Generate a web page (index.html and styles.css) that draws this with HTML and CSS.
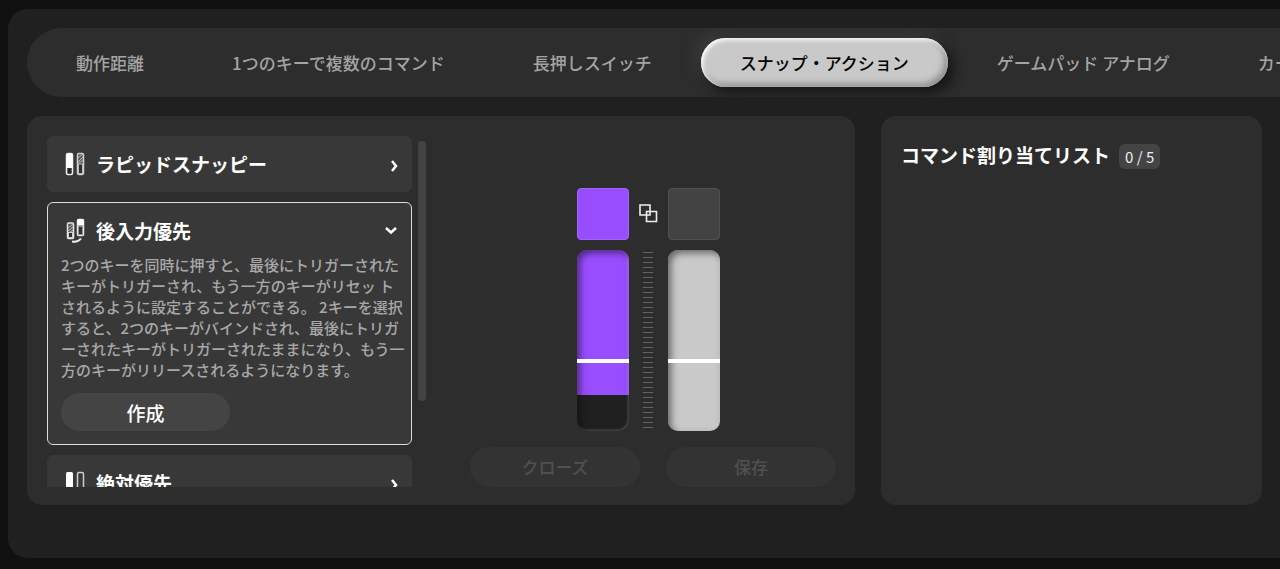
FILE: index.html
```html
<!DOCTYPE html>
<html lang="ja">
<head>
<meta charset="utf-8">
<meta name="viewport" content="width=device-width, initial-scale=1">
<title>スナップ・アクション</title>
<link rel="stylesheet" href="styles.css">
</head>
<body>
<main class="shell">
  <nav class="tabs">
    <button class="tab" type="button">動作距離</button>
    <button class="tab" type="button">1つのキーで複数のコマンド</button>
    <button class="tab" type="button">長押しスイッチ</button>
    <button class="tab tab-active" type="button">スナップ・アクション</button>
    <button class="tab" type="button">ゲームパッド アナログ</button>
    <button class="tab" type="button">カー</button>
  </nav>
  <div class="panels">
    <section class="panel editor">
      <div class="modes">
        <div class="mode-list">
          <article class="card">
            <button class="card-head" type="button">
              <svg class="mode-icon" viewBox="0 0 20 25" aria-hidden="true">
                <rect x="1.500" y="2.500" width="6" height="21" rx="1.500" fill="none" stroke="#eee" stroke-width="1.500"/>
                <path d="M1.500 3h6v14h-6z" fill="#fff"/><path d="M3 17.500h3v5H3z" fill="#252525"/>
                <rect x="12.500" y="2.500" width="6" height="21" rx="1.500" fill="#555" stroke="#d0d0d0" stroke-width="1.500"/>
                <path d="M13 7l5-4M13 11l5-5M14 12l4-3" stroke="#bbb"/>
                <rect x="13.500" y="13" width="4" height="9.500" fill="#303030" stroke="#bbb"/>
              </svg>
              <span class="card-title">ラピッドスナッピー</span>
              <svg class="chevron" viewBox="0 0 14 20" aria-hidden="true"><path d="M8 8l4 5-4 5"/></svg>
            </button>
          </article>
          <article class="card card-open">
            <button class="card-head" type="button" aria-expanded="true">
              <svg class="mode-icon" viewBox="0 0 20 25" aria-hidden="true">
                <rect x="2.500" y="5" width="6" height="15.500" rx="1" fill="#555" stroke="#e4e4e4" stroke-width="1.500"/>
                <path d="M3 10l5-4M3 13l5-4M5 14l3-2" stroke="#bbb"/>
                <rect x="3.500" y="14.500" width="4" height="5" fill="#303030" stroke="#ccc"/>
                <rect x="12.500" y="1.500" width="6" height="16" rx="1" fill="#444" stroke="#e4e4e4" stroke-width="1.500"/>
                <path d="M12.500 1.500h6v6h-6z" fill="#fff"/>
                <rect x="13.500" y="8.500" width="4" height="8" fill="#333" stroke="#999"/>
                <path d="M7 23.500q6 1 9-3" fill="none" stroke="#eee" stroke-width="2"/>
              </svg>
              <span class="card-title">後入力優先</span>
              <svg class="chevron" viewBox="0 0 14 20" aria-hidden="true"><path d="M2 8l5 4.500L12 8"/></svg>
            </button>
            <p class="desc">2つのキーを同時に押すと、最後にトリガーされた<br>キーがトリガーされ、もう一方のキーがリセッ ト<br>されるように設定することができる。 2キーを選択<br>すると、2つのキーがバインドされ、最後にトリガ<br>ーされたキーがトリガーされたままになり、もう一<br>方のキーがリリースされるようになります。</p>
            <button class="create" type="button">作成</button>
          </article>
          <article class="card">
            <button class="card-head" type="button">
              <svg class="mode-icon" viewBox="0 0 20 25" aria-hidden="true">
                <rect x="1" y="2" width="7" height="21" rx="1.500" fill="#fff"/>
                <rect x="12.500" y="2.500" width="6" height="20.500" rx="1.500" fill="none" stroke="#ccc" stroke-width="1.500"/>
              </svg>
              <span class="card-title">絶対優先</span>
              <svg class="chevron" viewBox="0 0 14 20" aria-hidden="true"><path d="M8 8l4 5-4 5"/></svg>
            </button>
          </article>
        </div>
        <div class="scroll-thumb"></div>
      </div>
      <div class="binding">
        <div class="keys">
          <div class="key key-a"></div>
          <svg class="link-icon" viewBox="0 0 20 20" fill="none" stroke="#eee" stroke-width="1.600" aria-hidden="true"><path d="M2 1h10v10H2zM8.500 7.500h10v10h-10z"/></svg>
          <div class="key key-b"></div>
          <div class="travel travel-a"><div class="fill"></div><div class="mark"></div></div>
          <div class="ruler"></div>
          <div class="travel travel-b"><div class="mark"></div></div>
        </div>
        <div class="actions">
          <button class="action" type="button" disabled>クローズ</button>
          <button class="action" type="button" disabled>保存</button>
        </div>
      </div>
    </section>
    <section class="panel assigned">
      <h2 class="assigned-title">コマンド割り当てリスト</h2>
      <span class="count">0 / 5</span>
    </section>
  </div>
</main>
</body>
</html>
```
FILE: styles.css
```css
* { box-sizing: border-box; }
body {
  margin: 0;
  padding: 9px 0 11px 8px;
  background: #111;
  color: #fff;
  font-family: "Noto Sans CJK JP", "Noto Sans", sans-serif;
  overflow: hidden;
}
button {
  margin: 0;
  padding: 0;
  border: 0;
  background: none;
  color: inherit;
  font: inherit;
}
.shell {
  padding: 19px 18px 53px 19px;
  border-radius: 20px 0 0 20px;
  background: #202020;
}
.tabs {
  display: flex;
  gap: 10px;
  margin-right: -18px;
  padding: 10px;
  border-radius: 35px 0 0 35px;
  background: #2d2d2d;
  overflow: hidden;
}
.tab {
  flex: none;
  height: 49px;
  padding: 0 39px;
  border-radius: 25px;
  color: #a4a4a4;
  font-size: 17px;
  font-weight: 500;
  white-space: nowrap;
}
.tab-active {
  background: #c9c9c9;
  color: #000;
  box-shadow: 6px 6px 12px #161616, -6px -6px 14px #3a3a3a,
    inset 2px 2px 4px #fff, inset -3px -3px 7px #888;
}
.panels {
  display: grid;
  grid-template-columns: minmax(0, 1fr) 381px;
  gap: 26px;
  margin-top: 19px;
}
.panel {
  border-radius: 15px;
  background: #2d2d2d;
}
.editor {
  display: grid;
  grid-template-columns: 379px minmax(0, 1fr);
  gap: 44px;
  padding: 20px 19px 18px 20px;
}
.modes {
  display: flex;
  gap: 6px;
  height: 351px;
}
.mode-list {
  flex: 1;
  display: flex;
  flex-direction: column;
  gap: 10px;
  overflow: hidden;
}
.scroll-thumb {
  width: 8px;
  height: 260px;
  margin-top: 5px;
  border-radius: 4px;
  background: #444;
}
.card {
  flex: none;
  border: 1px solid #383838;
  border-radius: 6px;
  background: #383838;
}
.card-head {
  display: flex;
  align-items: center;
  gap: 11px;
  width: 100%;
  height: 54px;
  padding: 0 13px 2px 17px;
  text-align: left;
}
.card-title {
  flex: 1;
  font-size: 19px;
  font-weight: 700;
}
.mode-icon { width: 20px; height: 25px; }
.chevron {
  width: 14px;
  height: 20px;
  fill: none;
  stroke: #fff;
  stroke-width: 2.5;
}
.card-open {
  padding-bottom: 13px;
  border-color: #ddd;
}
.card-open .card-head {
  height: 51px;
  padding-top: 5px;
}
.desc {
  margin: 0 0 13px;
  padding-left: 13px;
  color: #a8a8a8;
  font-size: 15px;
  font-weight: 500;
  line-height: 21px;
  white-space: nowrap;
}
.create {
  display: block;
  width: 169px;
  height: 38px;
  margin-left: 13px;
  border-radius: 19px;
  background: #444;
  font-size: 19px;
  font-weight: 500;
}
.binding {
  display: flex;
  flex-direction: column;
  justify-content: flex-end;
  gap: 16px;
}
.keys {
  display: grid;
  grid-template-columns: 52px 39px 52px;
  grid-template-rows: 52px 181px;
  row-gap: 10px;
  justify-content: center;
  align-items: center;
  justify-items: center;
  margin-right: 10px;
}
.key {
  width: 52px;
  height: 52px;
  border: 1px solid #505050;
  border-radius: 4px;
  background: #434343;
}
.key-a { border-color: #a463ff; background: #984dff; }
.link-icon { width: 20px; height: 20px; }
.travel {
  position: relative;
  width: 52px;
  height: 181px;
  border-radius: 10px;
  background: #202020;
  overflow: hidden;
}
.travel::after {
  content: "";
  position: absolute;
  inset: 0;
  border-radius: 10px;
  box-shadow: inset 3px 3px 7px rgba(0, 0, 0, 0.5), inset -1px -1px 3px rgba(255, 255, 255, 0.25);
}
.travel-b { background: #c9c9c9; }
.fill { height: 145px; background: #984dff; }
.mark {
  position: absolute;
  z-index: 1;
  top: 60%;
  left: 0;
  right: 0;
  height: 4px;
  background: #fff;
}
.ruler {
  width: 10px;
  height: 177px;
  background: repeating-linear-gradient(#646464 0 1px, transparent 1px 5px);
}
.actions {
  display: grid;
  grid-template-columns: 1fr 1fr;
  gap: 26px;
}
.action {
  height: 40px;
  padding-bottom: 2px;
  border-radius: 20px;
  background: #333;
  color: #505050;
  font-size: 17px;
  font-weight: 500;
}
.assigned {
  display: flex;
  align-items: flex-start;
  gap: 9px;
  padding: 24px 20px;
}
.assigned-title {
  margin: 0;
  font-size: 19px;
  font-weight: 700;
  line-height: 30px;
}
.count {
  margin-top: 4px;
  padding: 0 6px;
  border-radius: 6px;
  background: #444;
  color: #eee;
  font-size: 15px;
  line-height: 25px;
}
```
